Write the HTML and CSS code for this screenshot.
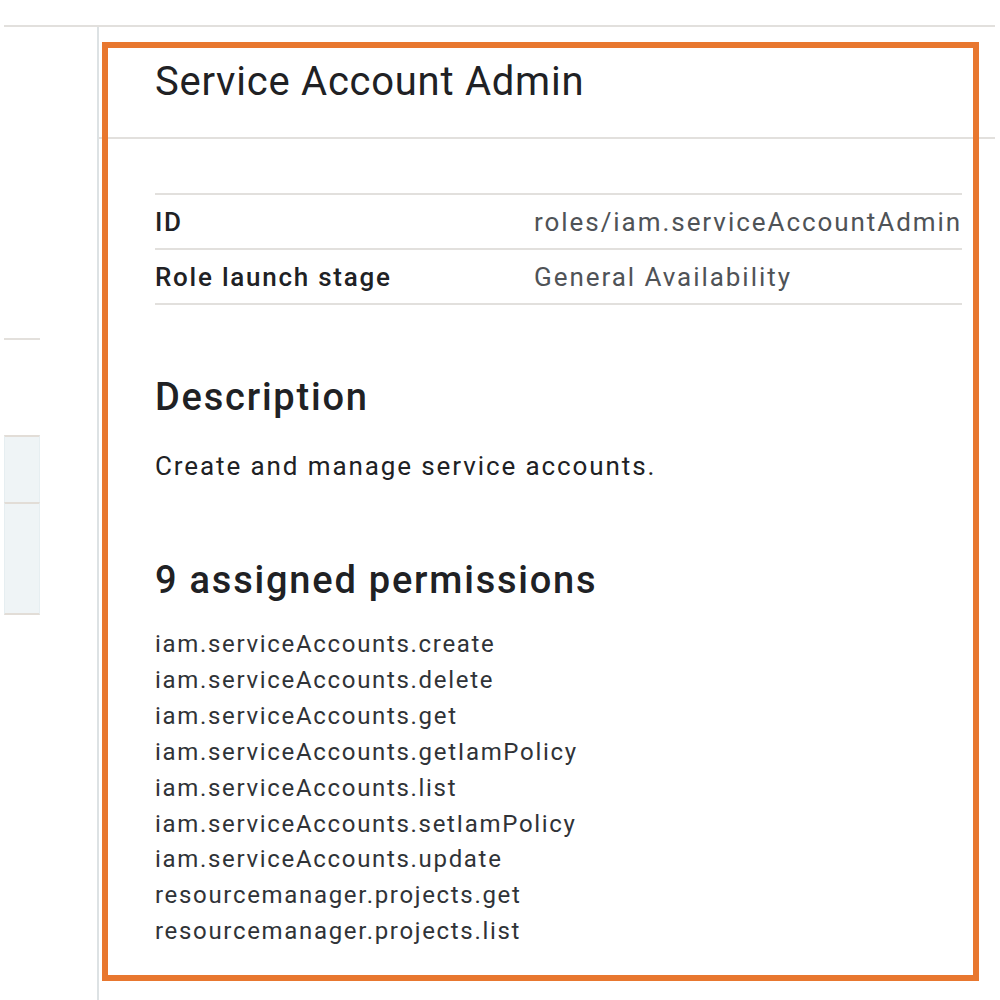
FILE: index.html
```html
<!DOCTYPE html>
<html lang="en">
<head>
<meta charset="utf-8">
<title>Service Account Admin</title>
<link rel="stylesheet" href="styles.css">
</head>
<body>
<div class="page">
  <div class="cols">
    <aside class="left">
      <div class="left-rule"></div>
      <div class="left-box">
        <div class="left-cell short"></div>
        <div class="left-cell tall"></div>
      </div>
    </aside>
    <main class="panel">
      <header class="panel-head">
        <h1 class="title">Service Account Admin</h1>
      </header>
      <section class="panel-body">
        <div class="props">
          <div class="prop-row">
            <div class="prop-key">ID</div>
            <div class="prop-val">roles/iam.serviceAccountAdmin</div>
          </div>
          <div class="prop-row">
            <div class="prop-key">Role launch stage</div>
            <div class="prop-val">General Availability</div>
          </div>
        </div>
        <h2 class="section-title desc-title">Description</h2>
        <p class="desc">Create and manage service accounts.</p>
        <h2 class="section-title perm-title">9 assigned permissions</h2>
        <ul class="perms">
          <li>iam.serviceAccounts.create</li>
          <li>iam.serviceAccounts.delete</li>
          <li>iam.serviceAccounts.get</li>
          <li>iam.serviceAccounts.getIamPolicy</li>
          <li>iam.serviceAccounts.list</li>
          <li>iam.serviceAccounts.setIamPolicy</li>
          <li>iam.serviceAccounts.update</li>
          <li>resourcemanager.projects.get</li>
          <li>resourcemanager.projects.list</li>
        </ul>
      </section>
      <div class="highlight"></div>
    </main>
  </div>
</div>
</body>
</html>
```
FILE: styles.css
```css
html, body {
  margin: 0;
  padding: 0;
  background: #ffffff;
  overflow: hidden;
}
body {
  font-family: Roboto, "Liberation Sans", Arial, sans-serif;
  color: #202124;
}
.page {
  margin: 25px 0 0 4px;
  width: 991px;
  border-top: 2px solid #e2e0dd;
  height: 975px;
}
.cols {
  display: flex;
  height: 100%;
}
.left {
  width: 93px;
  flex: none;
  border-right: 2px solid #dde2e4;
}
.left-rule {
  margin-top: 311px;
  width: 36px;
  height: 2px;
  background: #e3e0dc;
}
.left-box {
  margin-top: 95px;
  width: 36px;
  display: flex;
  flex-direction: column;
}
.left-cell {
  background: #eff4f6;
  border-top: 2px solid #e2ddd7;
  border-left: 1px solid #e6eef1;
  border-right: 1px solid #e6eef1;
}
.left-cell.short { height: 65px; }
.left-cell.tall { height: 109px; border-bottom: 2px solid #e2ddd7; }
.panel {
  flex: 1;
  position: relative;
}
.panel-head {
  padding: 31px 0 31px 56px;
  border-bottom: 2px solid #e2e0dd;
}
.title {
  margin: 0;
  font-size: 40px;
  line-height: 48px;
  font-weight: 400;
  letter-spacing: 0.75px;
  color: #202124;
}
.panel-body {
  padding: 54px 33px 0 56px;
}
.props {
  border-top: 2px solid #e2e0dd;
}
.prop-row {
  display: grid;
  grid-template-columns: 379px 1fr;
  padding: 7px 0 6px;
  line-height: 40px;
  font-size: 26px;
  border-bottom: 2px solid #e2e0dd;
}
.prop-key {
  font-weight: 500;
  letter-spacing: 1.75px;
  color: #202124;
}
.prop-val {
  color: #4f5357;
  letter-spacing: 1.95px;
  white-space: nowrap;
}
.section-title {
  margin: 0;
  font-size: 38px;
  line-height: 44px;
  font-weight: 500;
  letter-spacing: 1.78px;
  color: #202124;
}
.desc-title { margin-top: 70px; }
.desc {
  margin: 31px 0 0;
  font-size: 26px;
  line-height: 32px;
  letter-spacing: 1.9px;
  color: #202124;
}
.perm-title { margin-top: 76px; }
.perms {
  list-style: none;
  margin: 25px 0 0;
  padding: 0;
  font-size: 24px;
  line-height: 35.9px;
  letter-spacing: 1.68px;
  color: #303337;
}
.highlight {
  position: absolute;
  left: 3px;
  top: 15px;
  width: 877px;
  height: 939px;
  border: 6px solid #e8772f;
  box-sizing: border-box;
  pointer-events: none;
}
```
